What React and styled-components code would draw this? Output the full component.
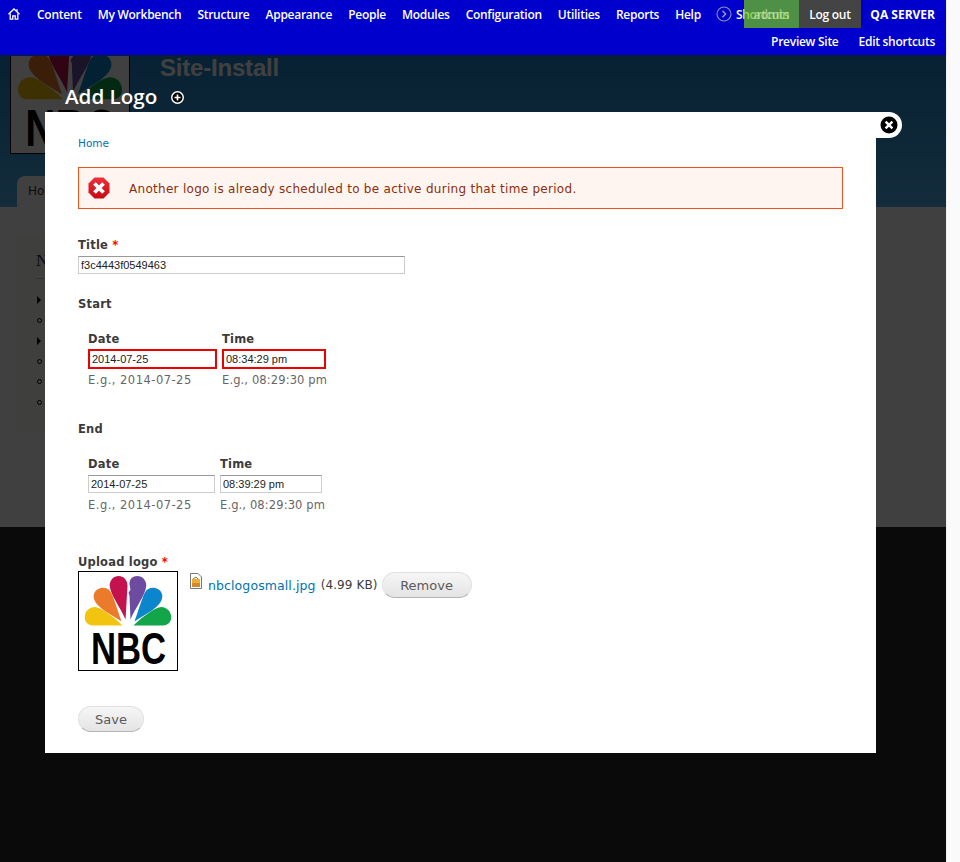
import React from 'react';
import styled, { createGlobalStyle } from 'styled-components';

const GlobalStyle = createGlobalStyle`
  html, body {
    margin: 0;
    padding: 0;
    background: #fff;
  }
  * {
    box-sizing: border-box;
  }
`;

const Viewport = styled.div`
  display: flex;
  width: 960px;
  height: 862px;
  overflow: hidden;
`;

const Page = styled.div`
  position: relative;
  display: flex;
  flex-direction: column;
  width: 946px;
  height: 862px;
  font-family: "DejaVu Sans", sans-serif;
`;

const ScrollTrack = styled.div`
  width: 14px;
  background: #fafafa;
  border-left: 1px solid #efefef;
`;

/* toolbar */
const Toolbar = styled.div`
  position: relative;
  z-index: 5;
  flex: none;
  height: 56px;
  background: #0000cc;
  border-bottom: 1px solid #0c1a26;
  font-family: "Open Sans", sans-serif;
  font-size: 12px;
  font-weight: 600;
  letter-spacing: -0.27px;
  color: #fff;
`;

const TopRow = styled.div`
  display: flex;
  align-items: center;
  height: 28px;
  padding-left: 8px;
`;

const HomeLink = styled.span`
  display: flex;
  width: 29px;
`;

const NavList = styled.div`
  display: flex;
  gap: 16px;
`;

const NavItem = styled.span`
  white-space: nowrap;
`;

const ShortcutToggle = styled.span`
  display: flex;
  align-items: center;
  gap: 4px;
  margin-left: 15px;
  white-space: nowrap;
`;

// sits over the shortcuts label, the reference shows both texts blended
const UserBox = styled.div`
  position: absolute;
  top: 0;
  left: 744px;
  width: 55px;
  height: 28px;
  display: flex;
  align-items: center;
  justify-content: center;
  background: rgba(107, 199, 18, 0.72);
  color: rgba(225, 235, 220, 0.55);
`;

const LogoutBox = styled.div`
  position: absolute;
  top: 0;
  left: 799px;
  width: 62px;
  height: 28px;
  display: flex;
  align-items: center;
  justify-content: center;
  background: #444;
`;

const ServerName = styled.div`
  position: absolute;
  top: 0;
  right: 11px;
  height: 28px;
  display: flex;
  align-items: center;
  font-weight: 700;
  letter-spacing: 0;
`;

const SubRow = styled.div`
  display: flex;
  justify-content: flex-end;
  align-items: center;
  gap: 20px;
  height: 27px;
  padding-right: 11px;
`;

/* dimmed page behind the overlay */
const Header = styled.div`
  position: relative;
  flex: none;
  display: flex;
  align-items: flex-start;
  gap: 30px;
  height: 151px;
  padding-left: 10px;
  background: linear-gradient(#1c84cc, #50b0ec);
  overflow: hidden;
`;

const SiteLogo = styled.div`
  flex: none;
  width: 120px;
  height: 120px;
  margin-top: -22px;
  background: #fff;
  border: 1px solid #000;
`;

const SiteName = styled.div`
  font-family: "Liberation Sans", sans-serif;
  font-size: 24px;
  font-weight: 700;
  letter-spacing: -0.2px;
  line-height: 24px;
  color: #fff;
`;

const Tab = styled.div`
  position: absolute;
  left: 17px;
  bottom: 0;
  width: 90px;
  height: 31px;
  padding: 8px 11px;
  background: #fff;
  border-radius: 8px 8px 0 0;
  font-size: 12px;
  color: #333;
`;

const Main = styled.div`
  flex: none;
  height: 320px;
  padding: 28px 16px 0;
  background: #fff;
`;

const Sidebar = styled.div`
  width: 260px;
  height: 196px;
  padding: 16px 20px;
  background: #fbfaf7;
`;

const SidebarTitle = styled.div`
  padding-bottom: 7px;
  font-family: "Liberation Serif", serif;
  font-size: 17px;
  line-height: 20px;
  color: #2a2a60;
  border-bottom: 1px solid #ccc;
`;

const MenuList = styled.div`
  display: flex;
  flex-direction: column;
  padding-top: 10px;
`;

const MenuRow = styled.div`
  display: flex;
  align-items: center;
  height: ${props => props.$h}px;
  padding-left: 1px;
`;

const Triangle = styled.span`
  width: 0;
  height: 0;
  border-left: 4px solid #000;
  border-top: 4px solid transparent;
  border-bottom: 4px solid transparent;
`;

const Circle = styled.span`
  width: 5px;
  height: 5px;
  border: 1px solid #000;
  border-radius: 50%;
`;

const Footer = styled.div`
  flex: 1;
  background: #292929;
`;

const Backdrop = styled.div`
  position: absolute;
  top: 56px;
  left: 0;
  right: 0;
  bottom: 0;
  background: rgba(0, 0, 0, 0.75);
`;

/* overlay */
const OverlayTitle = styled.div`
  position: absolute;
  top: 83px;
  left: 65px;
  display: flex;
  align-items: center;
  gap: 14px;
  font-family: "Open Sans", sans-serif;
  font-size: 20.6px;
  font-weight: 600;
  line-height: 26px;
  color: #fff;

  svg {
    margin-top: 2px;
  }
`;

const CloseTab = styled.div`
  position: absolute;
  top: 112px;
  left: 876px;
  width: 26px;
  height: 26px;
  display: flex;
  align-items: center;
  padding-left: 4px;
  background: #fff;
  border-radius: 0 13px 13px 0;
`;

const Modal = styled.div`
  position: absolute;
  top: 112px;
  left: 45px;
  width: 831px;
  height: 641px;
  padding: 24px 33px 21px;
  background: #fff;
  font-size: 12px;
  color: #3b3b3b;
`;

const Breadcrumb = styled.a`
  display: block;
  height: 14px;
  font-size: 10.5px;
  line-height: 14px;
  color: #0071b3;
`;

const Message = styled.div`
  display: flex;
  align-items: center;
  height: 42px;
  margin-top: 17px;
  padding-left: 9px;
  background: #fef5f1;
  border: 1px solid #ed541d;
  font-size: 12px;
  letter-spacing: 0.29px;
  color: #8c2e0b;
`;

const MessageText = styled.span`
  margin-left: 19px;
  padding-top: 1px;
`;

const FieldLabel = styled.div`
  height: 14px;
  margin-top: ${props => props.$top}px;
  font-size: 11.5px;
  font-weight: 700;
  line-height: 16px;
  letter-spacing: 0.2px;
  color: #3b3b3b;
`;

const Required = styled.span`
  color: #f00;
`;

const TextInput = styled.input`
  display: block;
  width: ${props => props.$w}px;
  height: ${props => props.$h}px;
  margin-top: ${props => props.$top}px;
  padding: 0 2px;
  background: #fff;
  border: ${props => (props.$error ? '2px solid #e00' : '1px solid #ccc')};
  border-top-color: ${props => (props.$error ? '#e00' : '#999')};
  border-radius: 0;
  outline: none;
  font-family: "Liberation Sans", sans-serif;
  font-size: 11px;
  color: #222;
`;

const DateRow = styled.div`
  display: flex;
  gap: 5px;
  padding-left: 10px;
`;

const DateCol = styled.div`
  width: ${props => props.$w}px;
  white-space: nowrap;
`;

const Hint = styled.div`
  height: 14px;
  margin-top: ${props => props.$top}px;
  font-size: 11.5px;
  line-height: 14px;
  letter-spacing: ${props => props.$spacing}px;
  color: #666;
`;

const UploadRow = styled.div`
  display: flex;
  align-items: flex-start;
  margin-top: 3px;
`;

const LogoFrame = styled.div`
  flex: none;
  width: 100px;
  height: 100px;
  background: #fff;
  border: 1px solid #000;
`;

const FileInfo = styled.div`
  display: flex;
  align-items: center;
  height: 28px;
  margin-left: 12px;
  font-size: 12.5px;
  letter-spacing: 0.1px;
  white-space: nowrap;
`;

const FileLink = styled.a`
  margin-left: 6px;
  color: #0071b3;
`;

const FileSize = styled.span`
  margin-left: 5px;
  font-size: 12px;
`;

const Button = styled.button`
  display: block;
  width: ${props => props.$w}px;
  height: 26px;
  margin: ${props => props.$margin};
  padding: 0;
  background: linear-gradient(#f6f6f6, #e4e4e4);
  border: 1px solid #e0e0e0;
  border-bottom-color: #b4b4b4;
  border-radius: 20px;
  font-family: "DejaVu Sans", sans-serif;
  font-size: 13px;
  color: #5a5a5a;
`;

const HomeIcon = () => (
  <svg width="12" height="12" viewBox="0 0 12 12" fill="none" stroke="#fff" strokeWidth="1.3">
    <path d="M0.5 6.2 L6 1 L11.5 6.2" />
    <path d="M2.2 5.4 V11.2 H4.8 V7.8 H7.2 V11.2 H9.8 V5.4" />
    <path d="M9 1.2 V3.4" />
  </svg>
);

const ChevronCircle = () => (
  <svg width="16" height="16" viewBox="0 0 16 16" fill="none" stroke="#8f8fb8" strokeWidth="1.1">
    <circle cx="8" cy="8" r="7" />
    <path d="M6.5 4.8 L9.6 8 L6.5 11.2" strokeWidth="1.6" />
  </svg>
);

const PlusBadge = () => (
  <svg width="13" height="13" viewBox="0 0 13 13">
    <circle cx="6.5" cy="6.5" r="6.5" fill="#fff" />
    <circle cx="6.5" cy="6.5" r="5" fill="#000" />
    <path d="M6.5 3.5 V9.5 M3.5 6.5 H9.5" stroke="#fff" strokeWidth="1.7" />
  </svg>
);

const CloseIcon = () => (
  <svg width="18" height="18" viewBox="0 0 18 18">
    <circle cx="9" cy="9" r="8.5" fill="#000" />
    <path d="M5.6 5.6 L12.4 12.4 M12.4 5.6 L5.6 12.4" stroke="#fff" strokeWidth="2.4" />
  </svg>
);

const ErrorIcon = () => (
  <svg width="22" height="22" viewBox="0 0 22 22">
    <defs>
      <linearGradient id="errFill" x1="0" y1="0" x2="0" y2="1">
        <stop offset="0" stopColor="#f0303a" />
        <stop offset="1" stopColor="#c40a12" />
      </linearGradient>
    </defs>
    <path d="M6.5 0.5 H15.5 L21.5 6.5 V15.5 L15.5 21.5 H6.5 L0.5 15.5 V6.5 Z" fill="url(#errFill)" />
    <path d="M6.5 6.5 L15.5 15.5 M15.5 6.5 L6.5 15.5" stroke="#fff" strokeWidth="3.8" />
  </svg>
);

const FileIcon = () => (
  <svg width="12" height="16" viewBox="0 0 12 16" style={{ flex: 'none', marginTop: -8 }}>
    <path d="M0.5 0.5 H8 L11.5 4 V15.5 H0.5 Z" fill="#fff" stroke="#777" />
    <rect x="2" y="6" width="8" height="8" fill="#eeb02a" />
    <rect x="2" y="10" width="8" height="4" fill="#d8862a" />
    <path d="M3 6 L6 4 L8 6" fill="none" stroke="#555" strokeWidth="0.8" />
  </svg>
);

// peacock logo, used big behind the overlay and small in the upload field
const NbcLogo = ({ size }) => (
  <svg width={size} height={size} viewBox="0 0 99 99" style={{ display: 'block' }}>
    <path d="M44 54 H14 C8 54 5 49 6 44 C7 38 13 34 19 36 C26 38 38 48 44 54 Z" fill="#f2c40f" />
    <path d="M43 50 C34 44 22 38 17 31 C12 24 16 17 23 16 C29 15 32 19 34 24 C37 32 40 42 43 50 Z" fill="#ec7a2b" />
    <path d="M47 48 C42 36 32 24 31 14 C31 8 35 4 40 4 C45 4 49 8 49 14 Z" fill="#c4124f" />
    <path d="M52 48 C57 36 67 24 68 14 C68 8 64 4 59 4 C54 4 51 7 51 12 L52 18 L50 21 L51 24 Z" fill="#6d4c9f" />
    <path d="M56 50 C65 44 77 38 82 31 C87 24 83 17 76 16 C70 15 67 19 65 24 C62 32 59 42 56 50 Z" fill="#0b86cc" />
    <path d="M55 54 H85 C91 54 94 49 93 44 C92 38 86 34 80 36 C73 38 61 48 55 54 Z" fill="#12a54a" />
    <text
      x="12"
      y="93"
      textLength="76"
      lengthAdjust="spacingAndGlyphs"
      fontFamily="Liberation Sans, sans-serif"
      fontSize="44"
      fontWeight="700"
      fill="#000"
    >
      NBC
    </text>
  </svg>
);

const navItems = ['Content', 'My Workbench', 'Structure', 'Appearance', 'People', 'Modules', 'Configuration', 'Utilities', 'Reports', 'Help'];

const menuRows = [
  { kind: 'tri', h: 21 },
  { kind: 'dot', h: 20 },
  { kind: 'tri', h: 21 },
  { kind: 'dot', h: 20 },
  { kind: 'dot', h: 21 },
  { kind: 'dot', h: 20 },
];

const DateGroup = ({ dateValue, timeValue, dateWidth, timeWidth, height, inputTop, hintTop, error }) => (
  <DateRow>
    <DateCol $w={dateWidth}>
      <FieldLabel $top={21}>Date</FieldLabel>
      <TextInput readOnly value={dateValue} $w={dateWidth} $h={height} $top={inputTop} $error={error} />
      <Hint $top={hintTop} $spacing={0.48}>E.g., 2014-07-25</Hint>
    </DateCol>
    <DateCol $w={timeWidth}>
      <FieldLabel $top={21}>Time</FieldLabel>
      <TextInput readOnly value={timeValue} $w={timeWidth} $h={height} $top={inputTop} $error={error} />
      <Hint $top={hintTop} $spacing={0.12}>E.g., 08:29:30 pm</Hint>
    </DateCol>
  </DateRow>
);

const App = () => {
  return (
    <Viewport>
      <GlobalStyle />
      <Page>
        <Toolbar>
          <TopRow>
            <HomeLink>
              <HomeIcon />
            </HomeLink>
            <NavList>
              {navItems.map(item => (
                <NavItem key={item}>{item}</NavItem>
              ))}
            </NavList>
            <ShortcutToggle>
              <ChevronCircle />
              Shortcuts
            </ShortcutToggle>
          </TopRow>
          <UserBox>admin</UserBox>
          <LogoutBox>Log out</LogoutBox>
          <ServerName>QA SERVER</ServerName>
          <SubRow>
            <span>Preview Site</span>
            <span>Edit shortcuts</span>
          </SubRow>
        </Toolbar>

        <Header>
          <SiteLogo>
            <NbcLogo size={118} />
          </SiteLogo>
          <SiteName>Site-Install</SiteName>
          <Tab>Home</Tab>
        </Header>

        <Main>
          <Sidebar>
            <SidebarTitle>Navigation</SidebarTitle>
            <MenuList>
              {menuRows.map((row, i) => (
                <MenuRow key={i} $h={row.h}>
                  {row.kind === 'tri' ? <Triangle /> : <Circle />}
                </MenuRow>
              ))}
            </MenuList>
          </Sidebar>
        </Main>

        <Footer />
        <Backdrop />

        <OverlayTitle>
          Add Logo
          <PlusBadge />
        </OverlayTitle>

        <CloseTab>
          <CloseIcon />
        </CloseTab>

        <Modal>
          <Breadcrumb>Home</Breadcrumb>

          <Message>
            <ErrorIcon />
            <MessageText>Another logo is already scheduled to be active during that time period.</MessageText>
          </Message>

          <FieldLabel $top={28}>
            Title <Required>*</Required>
          </FieldLabel>
          <TextInput readOnly value="f3c4443f0549463" $w={327} $h={18} $top={5} />

          <FieldLabel $top={22}>Start</FieldLabel>
          <DateGroup
            dateValue="2014-07-25"
            timeValue="08:34:29 pm"
            dateWidth={129}
            timeWidth={104}
            height={20}
            inputTop={4}
            hintTop={4}
            error
          />

          <FieldLabel $top={34}>End</FieldLabel>
          <DateGroup
            dateValue="2014-07-25"
            timeValue="08:39:29 pm"
            dateWidth={127}
            timeWidth={102}
            height={18}
            inputTop={5}
            hintTop={5}
          />

          <FieldLabel $top={42}>
            Upload logo <Required>*</Required>
          </FieldLabel>
          <UploadRow>
            <LogoFrame>
              <NbcLogo size={98} />
            </LogoFrame>
            <FileInfo>
              <FileIcon />
              <FileLink>nbclogosmall.jpg</FileLink>
              <FileSize>(4.99 KB)</FileSize>
            </FileInfo>
            <Button $w={90} $margin="1px 0 0 4px">Remove</Button>
          </UploadRow>

          <Button $w={66} $margin="35px 0 0 0">Save</Button>
        </Modal>
      </Page>
      <ScrollTrack />
    </Viewport>
  );
};

export default App;
